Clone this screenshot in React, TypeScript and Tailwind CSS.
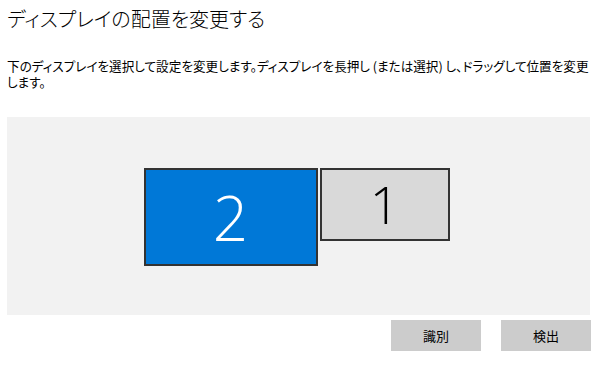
import React from "react";

const jp = "font-['Noto_Sans_CJK_JP',sans-serif] [font-feature-settings:'palt']";

const Display: React.FC<{ label: string; active?: boolean; big?: boolean }> = ({ label, active, big }) => (
  <div
    className={`flex items-center justify-center border-2 border-[#333333] ${
      active ? "bg-[#0078d7] text-white" : "bg-[#d9d9d9] text-black"
    } ${big ? "w-[174px] h-[98px] text-[62px]" : "w-[130px] h-[73px] text-[52px]"}`}
  >
    <span className="font-['Open_Sans',sans-serif] font-light leading-none">{label}</span>
  </div>
);

export default function App() {
  return (
    <div className={`w-[603px] h-[367px] bg-white text-black ${jp}`}>
      <h1 className="pl-[7px] pt-[5px] text-[20px] leading-[28px] font-light">ディスプレイの配置を変更する</h1>
      <p className="pl-[7px] pr-[10px] mt-[25px] text-[12.6px] leading-[16px]">
        下のディスプレイを選択して設定を変更します。ディスプレイを長押し (または選択) し、ドラッグして位置を変更します。
      </p>
      <div className="ml-[7px] mt-[27px] w-[583px] h-[198px] bg-[#f2f2f2] flex items-center justify-center pr-[4px]">
        <div className="flex items-start gap-[2px] mt-[1px]">
          <Display label="2" active big />
          <Display label="1" />
        </div>
      </div>
      <div className="flex justify-end gap-[20px] pr-[12px] mt-[5px]">
        <button className="w-[90px] h-[31px] bg-[#cccccc] text-[13px]">識別</button>
        <button className="w-[90px] h-[31px] bg-[#cccccc] text-[13px]">検出</button>
      </div>
    </div>
  );
}
